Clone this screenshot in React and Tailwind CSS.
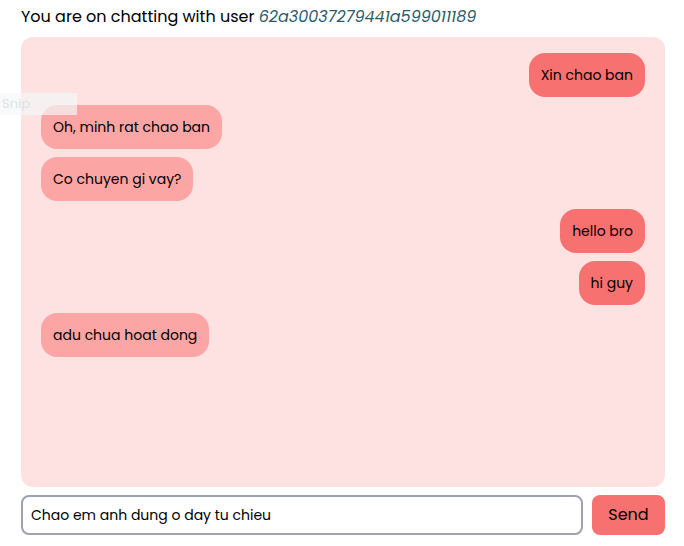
import { useState } from "react"

const messages = [
  { id: 1, text: "Xin chao ban", mine: true },
  { id: 2, text: "Oh, minh rat chao ban", mine: false },
  { id: 3, text: "Co chuyen gi vay?", mine: false },
  { id: 4, text: "hello bro", mine: true },
  { id: 5, text: "hi guy", mine: true },
  { id: 6, text: "adu chua hoat dong", mine: false },
]

export default function App() {
  const [draft, setDraft] = useState("Chao em anh dung o day tu chieu")

  return (
    <div className="relative w-[684px] h-[546px] bg-white pl-[21px] pr-[19px] pt-[5px] font-['Poppins','Inter',sans-serif] text-black">
      <p className="h-6 text-base leading-6">
        You are on chatting with user <i className="text-[#2a5b6b]">62a30037279441a599011189</i>
      </p>

      <div className="mt-2 h-[450px] rounded-xl bg-[#fee2e2] px-5 pt-4 flex flex-col gap-2">
        {messages.map((m) => (
          <div key={m.id} className={`flex ${m.mine ? "justify-end" : "justify-start"}`}>
            <div
              className={`h-11 px-3 flex items-center rounded-2xl text-sm ${
                m.mine ? "bg-[#f87171]" : "bg-[#fca5a5]"
              }`}
            >
              {m.text}
            </div>
          </div>
        ))}
      </div>

      <div className="mt-2 flex gap-[9px]">
        <input
          value={draft}
          onChange={(e) => setDraft(e.target.value)}
          className="flex-1 h-10 rounded-lg border-2 border-[#9ca3af] px-2 text-sm outline-none"
        />
        <button className="w-[73px] h-10 rounded-lg bg-[#f87171] text-base">Send</button>
      </div>

      {/* screenshot tool leftover */}
      <div className="absolute left-0 top-[93px] w-[77px] h-[22px] bg-[#f3f6f8]/70 text-[13px] leading-[22px] pl-[2px] text-[#dde3e7]">
        Snip
      </div>
    </div>
  )
}
